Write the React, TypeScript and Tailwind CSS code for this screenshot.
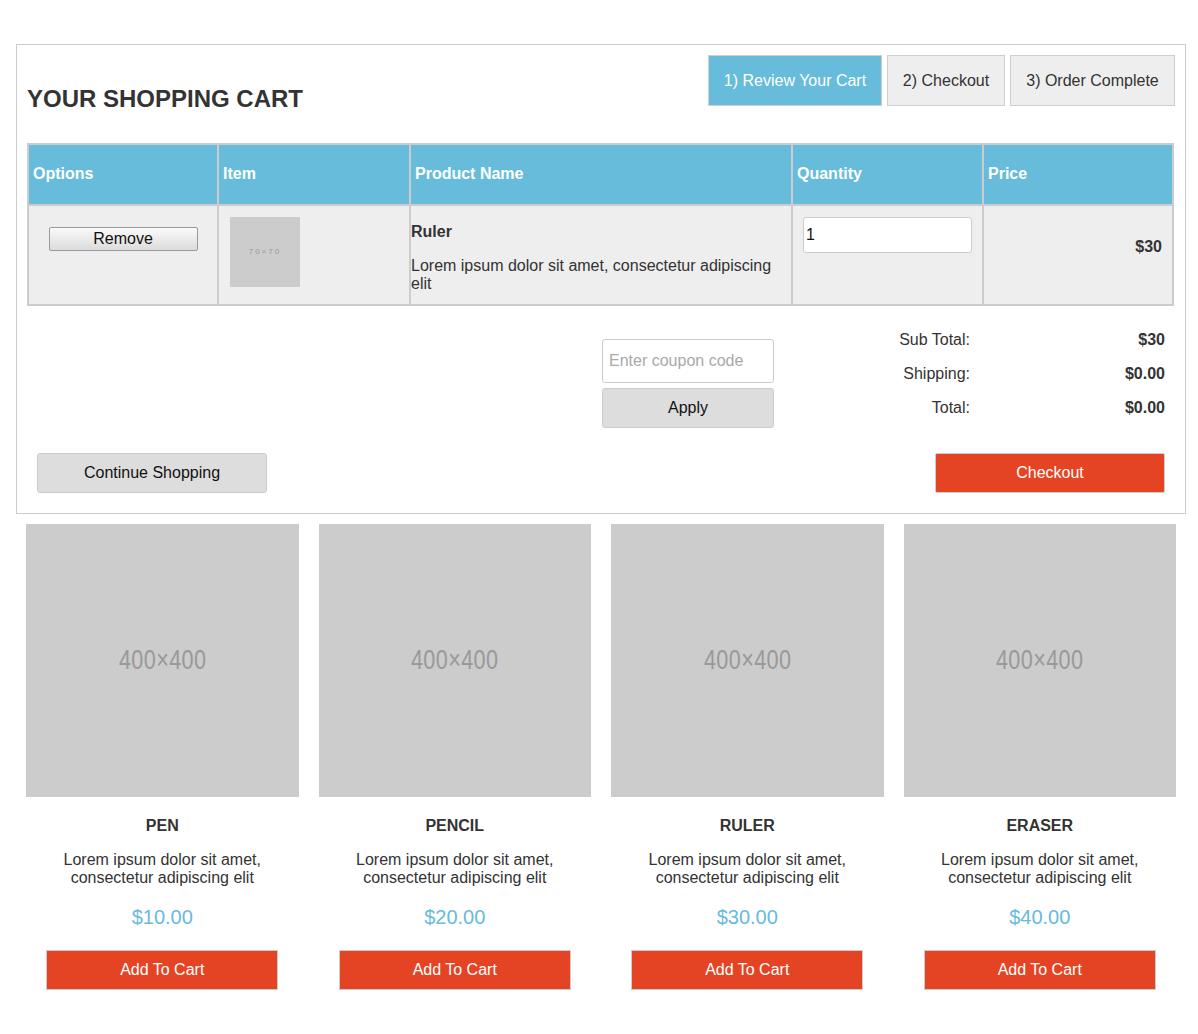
import React from "react";

const products = [
  { name: "PEN", price: "$10.00" },
  { name: "PENCIL", price: "$20.00" },
  { name: "RULER", price: "$30.00" },
  { name: "ERASER", price: "$40.00" },
];

export default function App() {
  return (
    <div
      className="bg-white text-[#333] text-[16px] min-h-[1034px]"
      style={{ fontFamily: '"Liberation Sans", Arial, sans-serif' }}
    >
      <div className="pt-[44px] ml-[16px] w-[1170px]">
        {/* Cart box */}
        <div className="border border-[#cccccc] px-[10px] pt-[10px] pb-[20px]">
          <div className="flex justify-between items-start">
            <h2 className="mt-[30px] text-[24px] leading-[27px] font-bold text-[#333]">
              YOUR SHOPPING CART
            </h2>
            <div className="flex gap-[5px]">
              <div className="w-[174px] h-[51px] flex items-center justify-center bg-[#67bbdb] border border-[#cfcfcf] text-white leading-none">
                1) Review Your Cart
              </div>
              <div className="w-[118px] h-[51px] flex items-center justify-center bg-[#eeeeee] border border-[#cfcfcf] text-[#333] leading-none">
                2) Checkout
              </div>
              <div className="w-[165px] h-[51px] flex items-center justify-center bg-[#eeeeee] border border-[#cfcfcf] text-[#333] leading-none">
                3) Order Complete
              </div>
            </div>
          </div>

          {/* Table */}
          <div className="mt-[31px] border-2 border-[#cccccc] bg-[#cccccc] grid grid-cols-[188px_190px_380px_189px_188px] gap-[2px] w-[1147px]">
            <div className="bg-[#67bbdb] h-[59px] flex items-center pl-[4px] pb-[2px] text-white font-bold">Options</div>
            <div className="bg-[#67bbdb] h-[59px] flex items-center pl-[4px] pb-[2px] text-white font-bold">Item</div>
            <div className="bg-[#67bbdb] h-[59px] flex items-center pl-[4px] pb-[2px] text-white font-bold">Product Name</div>
            <div className="bg-[#67bbdb] h-[59px] flex items-center pl-[4px] pb-[2px] text-white font-bold">Quantity</div>
            <div className="bg-[#67bbdb] h-[59px] flex items-center pl-[4px] pb-[2px] text-white font-bold">Price</div>

            <div className="bg-[#eeeeee] h-[98px] flex justify-center items-start pt-[21px]">
              <button className="w-[149px] h-[24px] border border-[#9a9a9a] rounded-[2px] bg-gradient-to-b from-[#fafafa] to-[#dcdcdc] text-[16px] leading-none text-[#111]">
                Remove
              </button>
            </div>
            <div className="bg-[#eeeeee] h-[98px] pt-[11px] pl-[11px]">
              <div className="w-[70px] h-[70px] bg-[#cccccc] flex items-center justify-center text-[8px] tracking-[2px] text-[#999]">
                70×70
              </div>
            </div>
            <div className="bg-[#eeeeee] h-[98px] pt-[17px]">
              <div className="font-bold leading-[18px]">Ruler</div>
              <div className="mt-[16px] leading-[18px]">
                Lorem ipsum dolor sit amet, consectetur adipiscing elit
              </div>
            </div>
            <div className="bg-[#eeeeee] h-[98px] pt-[11px] pl-[10px]">
              <div className="w-[169px] h-[36px] bg-white border border-[#cccccc] rounded-[3px] flex items-center pl-[2px] text-[#111]">
                1
              </div>
            </div>
            <div className="bg-[#eeeeee] h-[98px] pt-[32px] pr-[10px] text-right font-bold leading-[18px]">
              $30
            </div>
          </div>

          {/* Coupon + totals */}
          <div className="flex justify-end items-start">
            <div className="w-[172px] mt-[33px]">
              <div className="h-[44px] border border-[#cccccc] rounded-[3px] flex items-center pl-[6px] text-[#a9a9a9]">
                Enter coupon code
              </div>
              <button className="mt-[5px] w-full h-[40px] bg-[#dddddd] border border-[#cccccc] rounded-[3px] text-[#111]">
                Apply
              </button>
            </div>
            <div className="ml-[25px] mr-[10px] mt-[17px] grid grid-cols-[171px_195px]">
              <div className="h-[34px] leading-[34px] text-right">Sub Total:</div>
              <div className="h-[34px] leading-[34px] text-right font-bold">$30</div>
              <div className="h-[34px] leading-[34px] text-right">Shipping:</div>
              <div className="h-[34px] leading-[34px] text-right font-bold">$0.00</div>
              <div className="h-[34px] leading-[34px] text-right">Total:</div>
              <div className="h-[34px] leading-[34px] text-right font-bold">$0.00</div>
            </div>
          </div>

          <div className="flex justify-between mt-[25px] pl-[10px] pr-[10px]">
            <button className="w-[230px] h-[40px] bg-[#dddddd] border border-[#cccccc] rounded-[3px] text-[#111]">
              Continue Shopping
            </button>
            <button className="w-[230px] h-[40px] bg-[#e44424] border border-[#cccccc] rounded-[2px] text-white">
              Checkout
            </button>
          </div>
        </div>

        {/* Products */}
        <div className="grid grid-cols-4 mt-[10px]">
          {products.map((p) => (
            <div key={p.name} className="px-[10px] flex flex-col items-center text-center">
              <div className="w-full aspect-square bg-[#cccccc] flex items-center justify-center">
                <span className="text-[27px] text-[#999] scale-x-[0.8] inline-block tracking-[0.5px]">
                  400×400
                </span>
              </div>
              <div className="mt-[20px] font-bold leading-[18px]">{p.name}</div>
              <div className="mt-[16px] leading-[18px] w-[220px]">
                Lorem ipsum dolor sit amet, consectetur adipiscing elit
              </div>
              <div className="mt-[18px] text-[20px] leading-[24px] text-[#67bbdb]">{p.price}</div>
              <button className="mt-[21px] w-[232px] h-[40px] bg-[#e44424] border border-[#cccccc] text-white">
                Add To Cart
              </button>
            </div>
          ))}
        </div>
      </div>
    </div>
  );
}
